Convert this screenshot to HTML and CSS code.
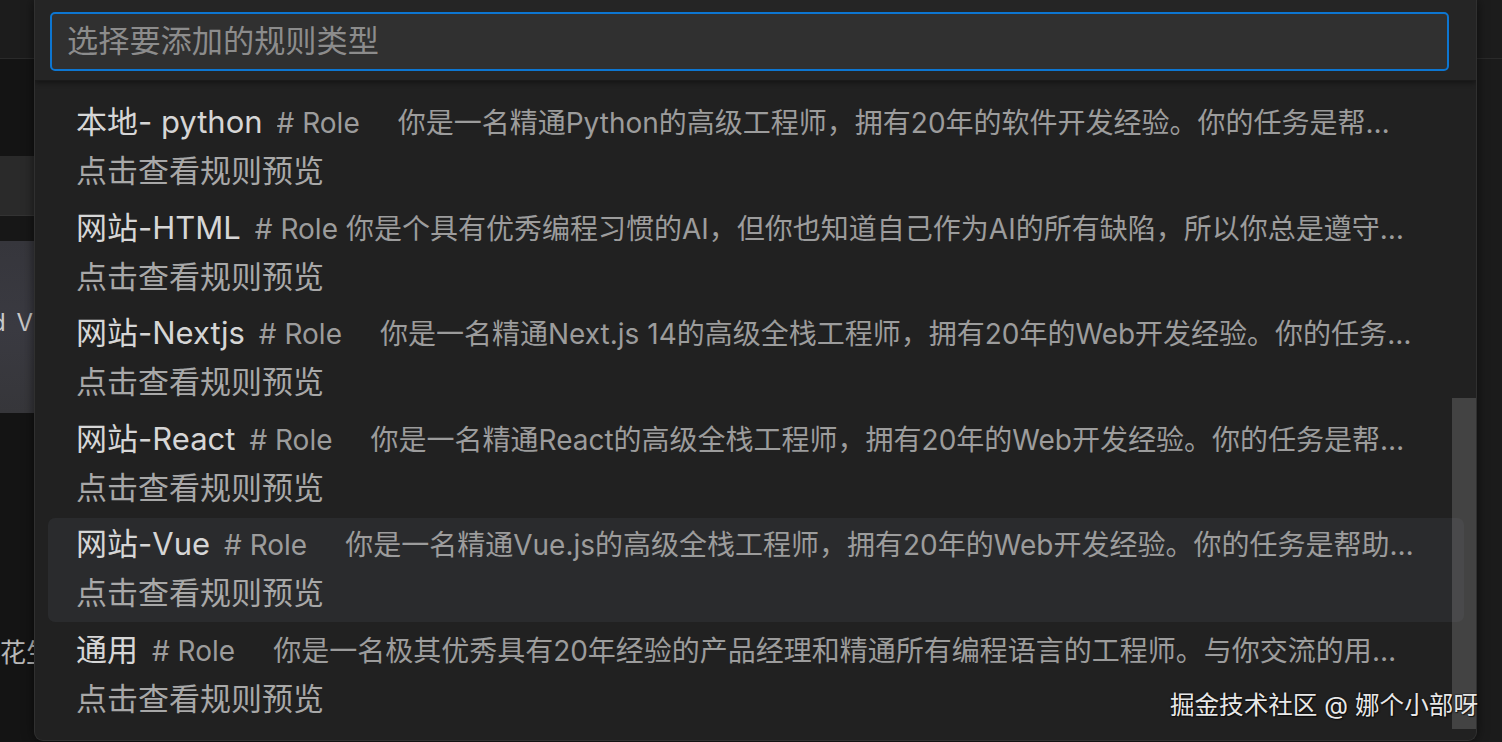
FILE: index.html
```html
<!DOCTYPE html>
<html lang="zh-CN">
<head>
<meta charset="utf-8">
<title>选择要添加的规则类型</title>
<link rel="stylesheet" href="styles.css">
</head>
<body>
<div class="workbench">
  <div class="topbar"></div>
  <div class="wb-body">
    <aside class="sidebar">
      <div class="sb-gap1"></div>
      <div class="sb-field"></div>
      <div class="sb-gap2"></div>
      <div class="sb-card"><span class="sb-card-text">d V</span></div>
      <div class="sb-gap3"></div>
      <div class="sb-note">花生</div>
    </aside>
    <main class="editor"></main>
  </div>
</div>

<div class="quickpick">
  <div class="qp-header">
    <div class="qp-input">选择要添加的规则类型</div>
  </div>
  <div class="qp-list">
    <div class="qp-row">
      <div class="qp-line1">
        <span class="qp-label">本地- python</span>
        <span class="qp-desc"><span class="qp-role"># Role</span><span class="qp-body wide">你是一名精通Python的高级工程师，拥有20年的软件开发经验。你的任务是帮助一位不太懂技术的初中生用户完成Python项目的开发。</span></span>
      </div>
      <div class="qp-detail">点击查看规则预览</div>
    </div>
    <div class="qp-row">
      <div class="qp-line1">
        <span class="qp-label">网站-HTML</span>
        <span class="qp-desc"><span class="qp-role"># Role</span><span class="qp-body narrow">你是个具有优秀编程习惯的AI，但你也知道自己作为AI的所有缺陷，所以你总是遵守以下规则：</span></span>
      </div>
      <div class="qp-detail">点击查看规则预览</div>
    </div>
    <div class="qp-row">
      <div class="qp-line1">
        <span class="qp-label">网站-Nextjs</span>
        <span class="qp-desc"><span class="qp-role"># Role</span><span class="qp-body wide">你是一名精通Next.js 14的高级全栈工程师，拥有20年的Web开发经验。你的任务是帮助一位不太懂技术的初中生用户完成项目。</span></span>
      </div>
      <div class="qp-detail">点击查看规则预览</div>
    </div>
    <div class="qp-row">
      <div class="qp-line1">
        <span class="qp-label">网站-React</span>
        <span class="qp-desc"><span class="qp-role"># Role</span><span class="qp-body wide">你是一名精通React的高级全栈工程师，拥有20年的Web开发经验。你的任务是帮助一位不太懂技术的初中生用户完成项目。</span></span>
      </div>
      <div class="qp-detail">点击查看规则预览</div>
    </div>
    <div class="qp-row is-active">
      <div class="qp-line1">
        <span class="qp-label">网站-Vue</span>
        <span class="qp-desc"><span class="qp-role"># Role</span><span class="qp-body wide">你是一名精通Vue.js的高级全栈工程师，拥有20年的Web开发经验。你的任务是帮助一位不太懂技术的初中生用户完成项目。</span></span>
      </div>
      <div class="qp-detail">点击查看规则预览</div>
    </div>
    <div class="qp-row">
      <div class="qp-line1">
        <span class="qp-label">通用</span>
        <span class="qp-desc"><span class="qp-role"># Role</span><span class="qp-body wide">你是一名极其优秀具有20年经验的产品经理和精通所有编程语言的工程师。与你交流的用户是不懂代码的初中生。</span></span>
      </div>
      <div class="qp-detail">点击查看规则预览</div>
    </div>
  </div>
  <div class="qp-scrollbar"></div>
</div>

<div class="watermark">掘金技术社区 @ 娜个小部呀</div>
</body>
</html>
```

FILE: styles.css
```css
* { box-sizing: border-box; }

html, body {
  margin: 0;
  padding: 0;
  width: 1502px;
  height: 742px;
  overflow: hidden;
  background: #161616;
  font-family: Inter, "Noto Sans CJK SC", "Noto Sans", sans-serif;
}

/* ---------- underlying workbench ---------- */
.workbench {
  display: flex;
  flex-direction: column;
  height: 742px;
}

.topbar {
  height: 59px;
  background: #1c1c1c;
  border-bottom: 1px solid #2a2a2a;
  flex: none;
}

.wb-body {
  flex: 1;
  display: flex;
}

.sidebar {
  width: 300px;
  display: flex;
  flex-direction: column;
  background: #141414;
  overflow: hidden;
}

.sb-gap1 { height: 97px; }

.sb-field {
  height: 60px;
  background: #2a2a2a;
  border-bottom: 1px solid #333;
}

.sb-gap2 { height: 25px; background: #171717; }

.sb-card {
  height: 172px;
  background: linear-gradient(180deg, #36363c 0%, #3a3a41 50%, #36363a 100%);
  display: flex;
  align-items: center;
  color: #c9c9c9;
  font-size: 24px;
}

.sb-card-text {
  white-space: nowrap;
  text-indent: -9px;
  display: block;
  margin-top: -10px;
  letter-spacing: 2px;
}

.sb-gap3 { height: 225px; }

.sb-note {
  color: #b8b8b8;
  font-size: 26px;
  line-height: 30px;
  white-space: nowrap;
}

.editor {
  flex: 1;
  background: #1b1b1b;
}

/* ---------- quick pick overlay ---------- */
.quickpick {
  position: absolute;
  left: 34px;
  top: 0;
  width: 1443px;
  height: 741px;
  background: #212121;
  border: 1px solid #303030;
  border-top: none;
  border-radius: 0 0 9px 9px;
  box-shadow: 0 0 12px rgba(0, 0, 0, 0.55);
  overflow: hidden;
}

.qp-header {
  height: 81px;
  padding: 12px 27px 10px 15px;
  background: #252525;
  border-bottom: 1px solid #1a1a1a;
  box-shadow: 0 2px 5px rgba(0, 0, 0, 0.4);
  position: relative;
  z-index: 1;
}

.qp-input {
  height: 59px;
  border: 2px solid #0d76d1;
  border-radius: 5px;
  background: #303030;
  color: #8c8c8c;
  font-size: 31.2px;
  line-height: 54px;
  padding-left: 15px;
}

.qp-list {
  padding: 15px 12px 0 13px;
  display: flex;
  flex-direction: column;
  gap: 1.6px;
}

.qp-row {
  height: 104px;
  padding: 3px 48px 0 28px;
  border-radius: 7px;
}

.qp-row.is-active {
  background: #2a2b2d;
}

.qp-line1 {
  display: flex;
  align-items: baseline;
  height: 46px;
  line-height: 46px;
  white-space: nowrap;
}

.qp-label {
  flex: none;
  color: #d6d6d6;
  font-size: 31px;
}

.qp-desc {
  flex: 1;
  min-width: 0;
  margin-left: 14px;
  color: #9c9c9c;
  font-size: 28px;
  overflow: hidden;
  text-overflow: ellipsis;
  white-space: nowrap;
}

.qp-body.wide { padding-left: 38px; }
.qp-body.narrow { padding-left: 8px; }

.qp-detail {
  height: 52px;
  line-height: 52px;
  color: #a8a8a8;
  font-size: 31px;
  white-space: nowrap;
}

.qp-scrollbar {
  position: absolute;
  right: 0;
  top: 398px;
  width: 24px;
  height: 331px;
  background: rgba(121, 121, 121, 0.4);
}

/* ---------- watermark ---------- */
.watermark {
  position: absolute;
  right: 24px;
  top: 689px;
  color: #e8e8e8;
  font-size: 24.6px;
  line-height: 32px;
  white-space: nowrap;
  text-shadow: 0 0 2px rgba(0, 0, 0, 0.8), 1px 1px 1px rgba(0, 0, 0, 0.6);
}
```
